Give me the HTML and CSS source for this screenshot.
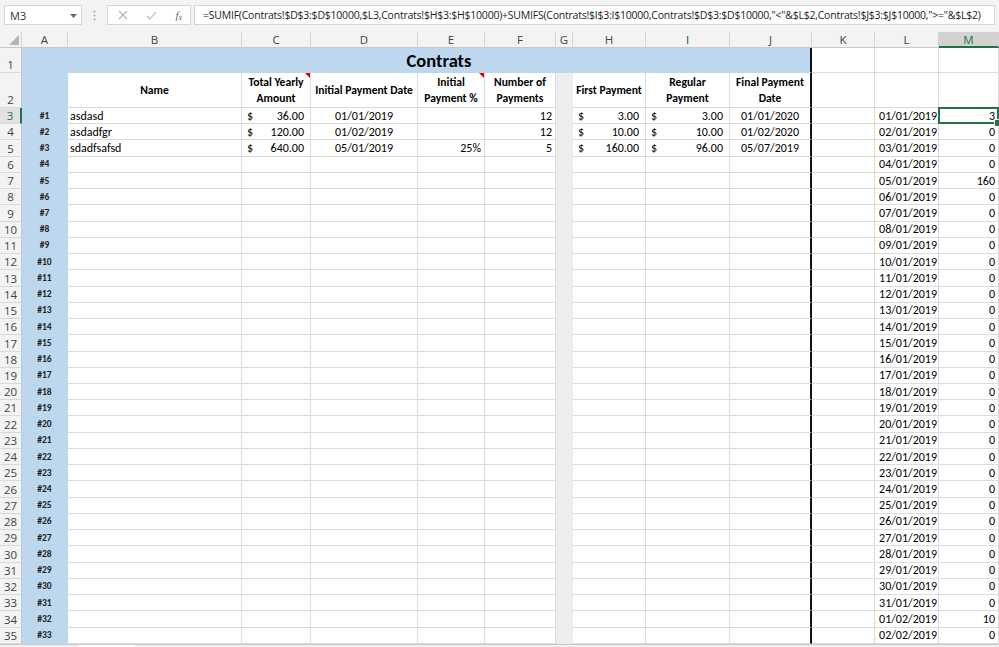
FILE: index.html
```html
<!DOCTYPE html>
<html>
<head>
<meta charset="utf-8">
<link rel="stylesheet" href="styles.css">
</head>
<body>
<div class="app">
  <div class="fbar">
    <div class="namebox"><span>M3</span><svg class="caret" width="7" height="4" viewBox="0 0 7 4"><path d="M0 0H7L3.5 4Z" fill="#6b6b6b"/></svg></div>
    <div class="grip"><svg width="3" height="11" viewBox="0 0 3 11"><circle cx="1.5" cy="1.5" r="1" fill="#a6a6a6"/><circle cx="1.5" cy="5.5" r="1" fill="#a6a6a6"/><circle cx="1.5" cy="9.5" r="1" fill="#a6a6a6"/></svg></div>
    <div class="btns">
      <svg width="10" height="10" viewBox="0 0 10 10"><path d="M1 1L9 9M9 1L1 9" stroke="#b3b3b3" stroke-width="1.1" fill="none"/></svg>
      <svg width="11" height="9" viewBox="0 0 11 9"><path d="M1 5L4 8L10 1" stroke="#b3b3b3" stroke-width="1.1" fill="none"/></svg>
      <span class="fx">f<sub>x</sub></span>
    </div>
    <div class="formula">=SUMIF(Contrats!$D$3:$D$10000,$L3,Contrats!$H$3:$H$10000)+SUMIFS(Contrats!$I$3:I$10000,Contrats!$D$3:$D$10000,"&lt;"&amp;$L$2,Contrats!$J$3:$J$10000,"&gt;="&amp;$L$2)</div>
  </div>

  <div class="sheet">
    <div class="row hdr">
      <span class="corner"><svg width="10" height="10" viewBox="0 0 10 10"><path d="M10 0V10H0Z" fill="#b4b4b4"/></svg></span>
      <span>A</span><span>B</span><span>C</span><span>D</span><span>E</span><span>F</span><span>G</span><span>H</span><span>I</span><span>J</span><span>K</span><span>L</span><span class="hsel">M</span>
    </div>

    <div class="row r1">
      <span class="rh">1</span><span class="a"></span>
      <span class="title">Contrats</span>
      <span></span><span></span><span></span>
    </div>

    <div class="row r2">
      <span class="rh">2</span><span class="a"></span>
      <span class="th">Name</span>
      <span class="th cm">Total Yearly Amount</span>
      <span class="th">Initial Payment Date</span>
      <span class="th cm">Initial Payment %</span>
      <span class="th">Number of Payments</span>
      <span class="g"></span>
      <span class="th">First Payment</span>
      <span class="th">Regular Payment</span>
      <span class="th j">Final Payment Date</span>
      <span></span><span></span><span></span>
    </div>

    <div class="row">
      <span class="rh rsel">3</span><span class="a">#1</span><span>asdasd</span>
      <span class="m"><b>$</b><b>36.00</b></span><span class="d">01/01/2019</span><span></span><span class="n">12</span><span class="g"></span>
      <span class="m"><b>$</b><b>3.00</b></span><span class="m"><b>$</b><b>3.00</b></span><span class="d j">01/01/2020</span>
      <span></span><span class="l">01/01/2019</span><span class="n sel">3</span>
    </div>
    <div class="row">
      <span class="rh">4</span><span class="a">#2</span><span>asdadfgr</span>
      <span class="m"><b>$</b><b>120.00</b></span><span class="d">01/02/2019</span><span></span><span class="n">12</span><span class="g"></span>
      <span class="m"><b>$</b><b>10.00</b></span><span class="m"><b>$</b><b>10.00</b></span><span class="d j">01/02/2020</span>
      <span></span><span class="l">02/01/2019</span><span class="n">0</span>
    </div>
    <div class="row">
      <span class="rh">5</span><span class="a">#3</span><span>sdadfsafsd</span>
      <span class="m"><b>$</b><b>640.00</b></span><span class="d">05/01/2019</span><span class="n">25%</span><span class="n">5</span><span class="g"></span>
      <span class="m"><b>$</b><b>160.00</b></span><span class="m"><b>$</b><b>96.00</b></span><span class="d j">05/07/2019</span>
      <span></span><span class="l">03/01/2019</span><span class="n">0</span>
    </div>
    <div class="row"><span class="rh">6</span><span class="a">#4</span><span></span><span></span><span></span><span></span><span></span><span class="g"></span><span></span><span></span><span class="j"></span><span></span><span class="l">04/01/2019</span><span class="n">0</span></div>
    <div class="row"><span class="rh">7</span><span class="a">#5</span><span></span><span></span><span></span><span></span><span></span><span class="g"></span><span></span><span></span><span class="j"></span><span></span><span class="l">05/01/2019</span><span class="n">160</span></div>
    <div class="row"><span class="rh">8</span><span class="a">#6</span><span></span><span></span><span></span><span></span><span></span><span class="g"></span><span></span><span></span><span class="j"></span><span></span><span class="l">06/01/2019</span><span class="n">0</span></div>
    <div class="row"><span class="rh">9</span><span class="a">#7</span><span></span><span></span><span></span><span></span><span></span><span class="g"></span><span></span><span></span><span class="j"></span><span></span><span class="l">07/01/2019</span><span class="n">0</span></div>
    <div class="row"><span class="rh">10</span><span class="a">#8</span><span></span><span></span><span></span><span></span><span></span><span class="g"></span><span></span><span></span><span class="j"></span><span></span><span class="l">08/01/2019</span><span class="n">0</span></div>
    <div class="row"><span class="rh">11</span><span class="a">#9</span><span></span><span></span><span></span><span></span><span></span><span class="g"></span><span></span><span></span><span class="j"></span><span></span><span class="l">09/01/2019</span><span class="n">0</span></div>
    <div class="row"><span class="rh">12</span><span class="a">#10</span><span></span><span></span><span></span><span></span><span></span><span class="g"></span><span></span><span></span><span class="j"></span><span></span><span class="l">10/01/2019</span><span class="n">0</span></div>
    <div class="row"><span class="rh">13</span><span class="a">#11</span><span></span><span></span><span></span><span></span><span></span><span class="g"></span><span></span><span></span><span class="j"></span><span></span><span class="l">11/01/2019</span><span class="n">0</span></div>
    <div class="row"><span class="rh">14</span><span class="a">#12</span><span></span><span></span><span></span><span></span><span></span><span class="g"></span><span></span><span></span><span class="j"></span><span></span><span class="l">12/01/2019</span><span class="n">0</span></div>
    <div class="row"><span class="rh">15</span><span class="a">#13</span><span></span><span></span><span></span><span></span><span></span><span class="g"></span><span></span><span></span><span class="j"></span><span></span><span class="l">13/01/2019</span><span class="n">0</span></div>
    <div class="row"><span class="rh">16</span><span class="a">#14</span><span></span><span></span><span></span><span></span><span></span><span class="g"></span><span></span><span></span><span class="j"></span><span></span><span class="l">14/01/2019</span><span class="n">0</span></div>
    <div class="row"><span class="rh">17</span><span class="a">#15</span><span></span><span></span><span></span><span></span><span></span><span class="g"></span><span></span><span></span><span class="j"></span><span></span><span class="l">15/01/2019</span><span class="n">0</span></div>
    <div class="row"><span class="rh">18</span><span class="a">#16</span><span></span><span></span><span></span><span></span><span></span><span class="g"></span><span></span><span></span><span class="j"></span><span></span><span class="l">16/01/2019</span><span class="n">0</span></div>
    <div class="row"><span class="rh">19</span><span class="a">#17</span><span></span><span></span><span></span><span></span><span></span><span class="g"></span><span></span><span></span><span class="j"></span><span></span><span class="l">17/01/2019</span><span class="n">0</span></div>
    <div class="row"><span class="rh">20</span><span class="a">#18</span><span></span><span></span><span></span><span></span><span></span><span class="g"></span><span></span><span></span><span class="j"></span><span></span><span class="l">18/01/2019</span><span class="n">0</span></div>
    <div class="row"><span class="rh">21</span><span class="a">#19</span><span></span><span></span><span></span><span></span><span></span><span class="g"></span><span></span><span></span><span class="j"></span><span></span><span class="l">19/01/2019</span><span class="n">0</span></div>
    <div class="row"><span class="rh">22</span><span class="a">#20</span><span></span><span></span><span></span><span></span><span></span><span class="g"></span><span></span><span></span><span class="j"></span><span></span><span class="l">20/01/2019</span><span class="n">0</span></div>
    <div class="row"><span class="rh">23</span><span class="a">#21</span><span></span><span></span><span></span><span></span><span></span><span class="g"></span><span></span><span></span><span class="j"></span><span></span><span class="l">21/01/2019</span><span class="n">0</span></div>
    <div class="row"><span class="rh">24</span><span class="a">#22</span><span></span><span></span><span></span><span></span><span></span><span class="g"></span><span></span><span></span><span class="j"></span><span></span><span class="l">22/01/2019</span><span class="n">0</span></div>
    <div class="row"><span class="rh">25</span><span class="a">#23</span><span></span><span></span><span></span><span></span><span></span><span class="g"></span><span></span><span></span><span class="j"></span><span></span><span class="l">23/01/2019</span><span class="n">0</span></div>
    <div class="row"><span class="rh">26</span><span class="a">#24</span><span></span><span></span><span></span><span></span><span></span><span class="g"></span><span></span><span></span><span class="j"></span><span></span><span class="l">24/01/2019</span><span class="n">0</span></div>
    <div class="row"><span class="rh">27</span><span class="a">#25</span><span></span><span></span><span></span><span></span><span></span><span class="g"></span><span></span><span></span><span class="j"></span><span></span><span class="l">25/01/2019</span><span class="n">0</span></div>
    <div class="row"><span class="rh">28</span><span class="a">#26</span><span></span><span></span><span></span><span></span><span></span><span class="g"></span><span></span><span></span><span class="j"></span><span></span><span class="l">26/01/2019</span><span class="n">0</span></div>
    <div class="row"><span class="rh">29</span><span class="a">#27</span><span></span><span></span><span></span><span></span><span></span><span class="g"></span><span></span><span></span><span class="j"></span><span></span><span class="l">27/01/2019</span><span class="n">0</span></div>
    <div class="row"><span class="rh">30</span><span class="a">#28</span><span></span><span></span><span></span><span></span><span></span><span class="g"></span><span></span><span></span><span class="j"></span><span></span><span class="l">28/01/2019</span><span class="n">0</span></div>
    <div class="row"><span class="rh">31</span><span class="a">#29</span><span></span><span></span><span></span><span></span><span></span><span class="g"></span><span></span><span></span><span class="j"></span><span></span><span class="l">29/01/2019</span><span class="n">0</span></div>
    <div class="row"><span class="rh">32</span><span class="a">#30</span><span></span><span></span><span></span><span></span><span></span><span class="g"></span><span></span><span></span><span class="j"></span><span></span><span class="l">30/01/2019</span><span class="n">0</span></div>
    <div class="row"><span class="rh">33</span><span class="a">#31</span><span></span><span></span><span></span><span></span><span></span><span class="g"></span><span></span><span></span><span class="j"></span><span></span><span class="l">31/01/2019</span><span class="n">0</span></div>
    <div class="row"><span class="rh">34</span><span class="a">#32</span><span></span><span></span><span></span><span></span><span></span><span class="g"></span><span></span><span></span><span class="j"></span><span></span><span class="l">01/02/2019</span><span class="n">10</span></div>
    <div class="row"><span class="rh">35</span><span class="a">#33</span><span></span><span></span><span></span><span></span><span></span><span class="g"></span><span></span><span></span><span class="j"></span><span></span><span class="l">02/02/2019</span><span class="n">0</span></div>
  </div>

  <div class="tabs"><div class="tab"></div></div>
</div>
</body>
</html>
```

FILE: styles.css
```css
* { box-sizing: border-box; margin: 0; padding: 0; }

body {
  margin: 0;
  width: 999px;
  height: 647px;
  overflow: hidden;
  background: #fff;
  font-family: "Carlito", "Lato", "Liberation Sans", sans-serif;
  color: #000;
}

/* ---------- formula bar ---------- */
.fbar {
  height: 32px;
  background: #f3f3f3;
  display: flex;
  align-items: flex-start;
  padding: 5px 4px 0 4px;
  font-family: "Open Sans", "Noto Sans", sans-serif;
  font-size: 11px;
  color: #333;
}
.namebox {
  width: 78px;
  height: 20px;
  background: #fff;
  border: 1px solid #d6d6d6;
  display: flex;
  align-items: center;
  justify-content: space-between;
  padding: 0 4px 0 5px;
}
.caret { margin-top: 1px; }
.grip {
  width: 25px;
  height: 20px;
  display: flex;
  align-items: center;
  justify-content: center;
}
.btns {
  width: 84px;
  height: 20px;
  background: #fff;
  border: 1px solid #d6d6d6;
  display: flex;
  align-items: center;
  justify-content: space-between;
  padding: 0 8px 0 10px;
}
.fx {
  font-family: "Liberation Serif", serif;
  font-style: italic;
  font-size: 11px;
  color: #6a6a6a;
}
.fx sub { font-size: 8px; vertical-align: -1px; }
.formula {
  flex: 1;
  margin-left: 3px;
  height: 20px;
  background: #fff;
  border: 1px solid #d6d6d6;
  padding: 0 0 0 8px;
  line-height: 18px;
  white-space: nowrap;
  overflow: hidden;
  font-size: 10.5px;
  letter-spacing: -0.23px;
  color: #222;
}

/* ---------- sheet grid ---------- */
.row {
  display: grid;
  grid-template-columns: 22px 46px 174px 69px 107px 67px 71px 17px 73px 84px 82px 63px 64px 60px;
  height: 16.24px;
}
.row > span {
  border-right: 1px solid #dcdcdc;
  border-bottom: 1px solid #dcdcdc;
  font-size: 12px;
  display: flex;
  align-items: center;
  padding: 0 2px;
  white-space: nowrap;
  overflow: hidden;
}

/* column headers */
.hdr { height: 16px; }
.hdr > span {
  background: #f3f3f3;
  border-right: 1px solid #d4d4d4;
  border-bottom: 1px solid #c8c8c8;
  justify-content: center;
  font-family: "Open Sans", "Noto Sans", sans-serif;
  font-size: 11.5px;
  color: #444;
}
.hdr > span.corner {
  justify-content: flex-end;
  align-items: flex-end;
  padding: 0 2px 2px 0;
}
.hdr > span.hsel {
  background: #d2d2d2;
  color: #217346;
  border-bottom: 2px solid #217346;
}

/* row headers */
.row > span.rh {
  background: #f3f3f3;
  border-right: 1px solid #c8c8c8;
  border-bottom: 1px solid #d9d9d9;
  justify-content: center;
  align-items: flex-end;
  font-family: "Open Sans", "Noto Sans", sans-serif;
  font-size: 11.5px;
  line-height: 15px;
  color: #444;
  padding: 0;
}
.row > span.rsel {
  background: #e1e1e1;
  color: #217346;
  border-right: 2px solid #217346;
}

/* special cells */
.row > span.a {
  background: #bdd7ee;
  border-color: #bdd7ee;
  justify-content: center;
  font-size: 9.5px;
  font-weight: 700;
  color: #222;
}
.row > span.g {
  background: #ededed;
  border-color: #ededed;
}
.row > span.j { border-right: 2px solid #111; }

.r1 { height: 25px; }
.r2 { height: 35px; }

.row > span.title {
  grid-column: span 9;
  background: #bdd7ee;
  border-bottom-color: #bdd7ee;
  border-right: 2px solid #111;
  justify-content: center;
  font-size: 18.5px;
  font-weight: 700;
  padding-top: 1px;
}
.r1 > span.a { border-bottom-color: #bdd7ee; }

.row > span.th {
  white-space: normal;
  text-align: center;
  justify-content: center;
  font-weight: 700;
  font-size: 11.6px;
  line-height: 16px;
  padding: 0 2px;
}

.row > span.m {
  justify-content: space-between;
  padding: 0 6px 0 5px;
}
.m b { font-weight: 400; }
.row > span.n { justify-content: flex-end; padding-right: 3px; }
.row > span.d { justify-content: center; }
.row > span.l { justify-content: flex-end; padding-right: 1px; }

/* comment indicator */
.row > span.cm { position: relative; }
.cm::after {
  content: "";
  position: absolute;
  top: 0;
  right: 0;
  border-top: 5px solid #e00000;
  border-left: 5px solid transparent;
}

/* active cell */
.row > span.sel { position: relative; overflow: visible; }
.sel::before {
  content: "";
  position: absolute;
  left: -1px;
  top: -1px;
  right: -1px;
  bottom: -1px;
  border: 2px solid #217346;
}
.sel::after {
  content: "";
  position: absolute;
  right: -4px;
  bottom: -4px;
  width: 6px;
  height: 6px;
  background: #217346;
  border: 1px solid #fff;
}

/* sheet tab strip */
.tabs {
  height: 3px;
  background: #f0f0f0;
  border-top: 1px solid #c8c8c8;
  padding-left: 78px;
}
.tab {
  width: 57px;
  height: 2px;
  background: #fff;
}
```
